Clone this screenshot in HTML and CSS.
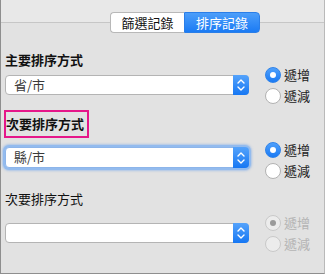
FILE: index.html
```html
<!DOCTYPE html>
<html lang="zh-Hant">
<head>
<meta charset="utf-8">
<link rel="stylesheet" href="styles.css">
</head>
<body>
<div class="frame">
  <div class="tabs">
    <div class="seg seg-left">篩選記錄</div>
    <div class="seg seg-right">排序記錄</div>
  </div>

  <section class="sec sec1">
    <div class="label bold">主要排序方式</div>
    <div class="row">
      <div class="select"><span class="val">省/市</span><span class="step"><svg width="16" height="20" viewBox="0 0 16 20"><path d="M5 8 L8 5 L11 8 M5 12 L8 15 L11 12" fill="none" stroke="#fff" stroke-width="1.4" stroke-linecap="round" stroke-linejoin="round"/></svg></span></div>
      <div class="radios">
        <div class="radio"><span class="dot on"></span>遞增</div>
        <div class="radio"><span class="dot"></span>遞減</div>
      </div>
    </div>
  </section>

  <section class="sec sec2">
    <div class="hl"><div class="label bold">次要排序方式</div></div>
    <div class="row">
      <div class="select focus"><span class="val">縣/市</span><span class="step"><svg width="16" height="20" viewBox="0 0 16 20"><path d="M5 8 L8 5 L11 8 M5 12 L8 15 L11 12" fill="none" stroke="#fff" stroke-width="1.4" stroke-linecap="round" stroke-linejoin="round"/></svg></span></div>
      <div class="radios shift">
        <div class="radio"><span class="dot on"></span>遞增</div>
        <div class="radio"><span class="dot"></span>遞減</div>
      </div>
    </div>
  </section>

  <section class="sec sec3">
    <div class="label">次要排序方式</div>
    <div class="row">
      <div class="select"><span class="val"></span><span class="step"><svg width="16" height="20" viewBox="0 0 16 20"><path d="M5 8 L8 5 L11 8 M5 12 L8 15 L11 12" fill="none" stroke="#fff" stroke-width="1.4" stroke-linecap="round" stroke-linejoin="round"/></svg></span></div>
      <div class="radios disabled">
        <div class="radio"><span class="dot off-on"></span>遞增</div>
        <div class="radio"><span class="dot"></span>遞減</div>
      </div>
    </div>
  </section>
</div>
</body>
</html>
```

FILE: styles.css
```css
* { box-sizing: border-box; }
html, body { margin: 0; padding: 0; }
body {
  width: 325px;
  height: 274px;
  overflow: hidden;
  font-family: "Noto Sans CJK TC", "Noto Sans", sans-serif;
  font-size: 13px;
  color: #111;
}
.frame {
  width: 325px;
  height: 274px;
  border-left: 1px solid #8e8e8e;
  border-right: 1px solid #b9b9b9;
  border-bottom: 1px solid #8e8e8e;
  background: linear-gradient(#e8e8e8 0, #e8e8e8 22px, #c6c6c6 22px, #c6c6c6 23px, #e2e2e2 23px);
  padding: 12px 0 0 3px;
}
.tabs {
  display: flex;
  margin-left: 106px;
  height: 21px;
}
.seg {
  height: 21px;
  line-height: 20px;
  font-size: 13px;
  text-align: center;
}
.seg-left {
  width: 74px;
  background: #fff;
  border: 1px solid #b8b8b8;
  border-right: none;
  border-radius: 4px 0 0 4px;
  color: #111;
}
.seg-right {
  width: 76px;
  background: linear-gradient(#4c9efa, #1b7bf4);
  color: #fff;
  border-radius: 0 4px 4px 0;
  border: 1px solid #2a7ee8;
}
.label {
  height: 16px;
  line-height: 16px;
  font-size: 13px;
  white-space: nowrap;
}
.bold { font-weight: 700; }
.sec1 { margin-top: 19px; }
.sec1 .row { margin-top: 7px; }
.sec2 { margin-top: 15px; }
.hl {
  display: inline-block;
  border: 2px solid #e5178a;
  padding: 4px 3px 4px 0;
  margin-left: 0;
}
.sec2 .row { margin-top: 9px; }
.sec3 { margin-top: 23px; }
.sec3 .label { margin-left: 1px; }
.sec3 .row { margin-top: 16px; }
.sec1 .label { margin-left: 1px; }
.sec2 .label { margin-left: 0; }
.row {
  display: flex;
  align-items: center;
}
.select {
  width: 244px;
  height: 20px;
  margin-left: 1px;
  background: #fff;
  border: 1px solid #b4b4b4;
  border-radius: 4px;
  display: flex;
  align-items: stretch;
  overflow: visible;
}
.select.focus {
  border-color: #8db5ea;
  box-shadow: 0 0 0 2px #93bbee, 0 0 2px 3px rgba(120,170,235,0.5);
  height: 21px;
}
.val {
  flex: 1;
  padding-left: 8px;
  line-height: 18px;
  color: #3a3a3a;
  font-size: 13px;
}
.step {
  width: 16px;
  margin: -1px -1px -1px 0;
  background: linear-gradient(#55a3fb, #1677f3);
  border-radius: 0 4px 4px 0;
  display: flex;
  align-items: center;
  justify-content: center;
}
.step svg { display: block; }
.radios {
  display: flex;
  flex-direction: column;
  gap: 5px;
  margin: -8.5px 0 -8.5px 16px;
}
.radios.shift { margin-top: -6px; margin-bottom: -11px; }
.radio {
  display: flex;
  align-items: center;
  height: 16px;
  line-height: 16px;
  font-size: 13px;
  color: #222;
}
.dot {
  width: 16px;
  height: 16px;
  border-radius: 50%;
  background: #fff;
  border: 1px solid #b2b2b2;
  margin-right: 3px;
  display: flex;
  align-items: center;
  justify-content: center;
}
.dot.on {
  background: linear-gradient(#4fa0fb, #1a7af4);
  border-color: #2f83ea;
}
.dot.on::after {
  content: "";
  width: 6px;
  height: 6px;
  border-radius: 50%;
  background: #fff;
}
.disabled .radio { color: #b4b4b4; }
.disabled .dot {
  background: #ececec;
  border-color: #c9c9c9;
}
.dot.off-on::after {
  content: "";
  width: 6px;
  height: 6px;
  border-radius: 50%;
  background: #9a9a9a;
}
```
